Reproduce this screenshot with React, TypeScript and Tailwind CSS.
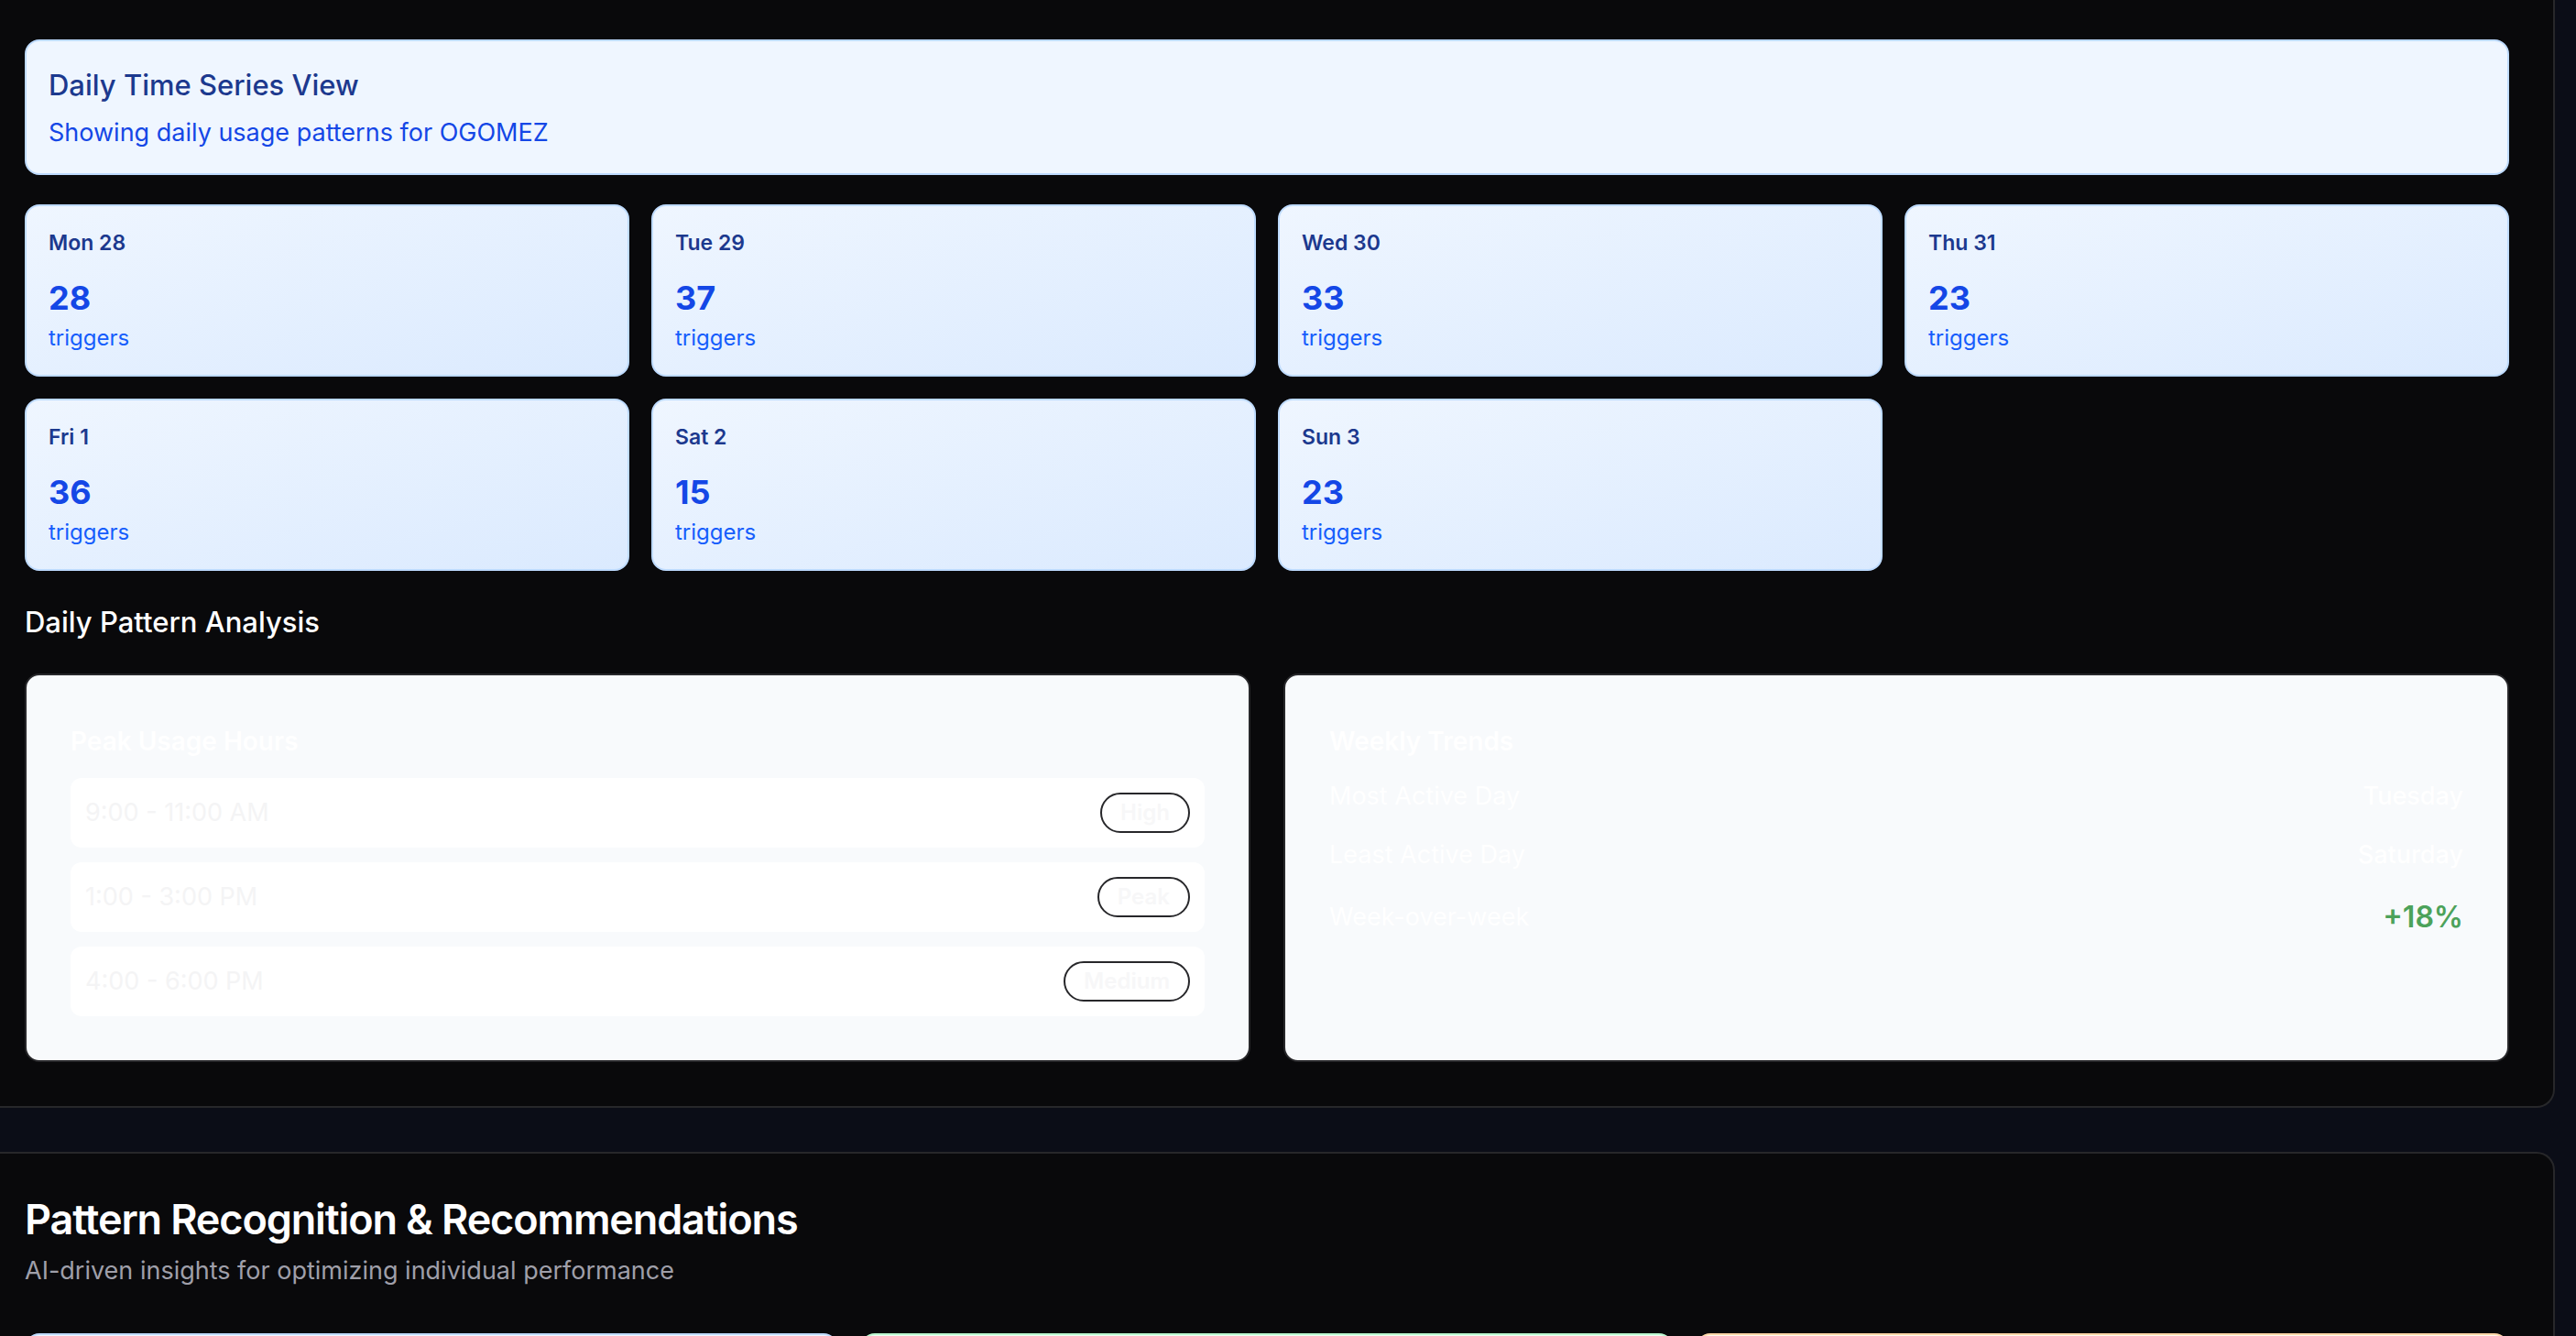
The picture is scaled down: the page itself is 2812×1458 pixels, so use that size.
const days = [
  { label: "Mon 28", count: 28 },
  { label: "Tue 29", count: 37 },
  { label: "Wed 30", count: 33 },
  { label: "Thu 31", count: 23 },
  { label: "Fri 1", count: 36 },
  { label: "Sat 2", count: 15 },
  { label: "Sun 3", count: 23 },
];

const peakHours = [
  { time: "9:00 - 11:00 AM", level: "High" },
  { time: "1:00 - 3:00 PM", level: "Peak" },
  { time: "4:00 - 6:00 PM", level: "Medium" },
];

const DayCard = ({ label, count }: { label: string; count: number }) => {
  return (
    <div className="rounded-[16px] border-2 border-blue-200 bg-gradient-to-br from-blue-50 to-blue-100 p-6">
      <p className="text-[23px] leading-[32px] font-semibold text-blue-900">{label}</p>
      <p className="mt-4 text-[36px] leading-[56px] font-bold text-blue-700">{count}</p>
      <p className="text-[24px] leading-[32px] text-blue-600">triggers</p>
    </div>
  );
};

export default function App() {
  return (
    <div
      className="min-h-screen bg-[#0b0d17] pr-[23px] pb-12 flex flex-col gap-12"
      style={{ fontFamily: "Inter, 'Noto Sans', sans-serif" }}
    >
      {/* section scrolled past its top */}
      <section className="bg-[#09090b] border-r-2 border-b-2 border-[#27272a] rounded-br-[20px] pl-[27px] pr-12 pt-[43px] pb-12 flex flex-col gap-8">
        <div className="rounded-[16px] border-2 border-blue-200 bg-blue-50 p-6">
          <h3 className="text-[31px] leading-[48px] font-medium text-blue-900">Daily Time Series View</h3>
          <p className="mt-2 text-[27px] leading-[40px] text-blue-700">Showing daily usage patterns for OGOMEZ</p>
        </div>

        <div className="grid grid-cols-4 gap-6">
          {days.map((d) => (
            <DayCard key={d.label} label={d.label} count={d.count} />
          ))}
        </div>

        <div className="flex flex-col gap-8">
          <h4 className="text-[31px] leading-[48px] font-medium text-white">Daily Pattern Analysis</h4>
          <div className="grid grid-cols-2 gap-9">
            <div className="rounded-[16px] border-2 border-[#27272a] bg-slate-50 p-12">
              <h5 className="text-[28px] leading-[48px] font-semibold text-white">Peak Usage Hours</h5>
              <div className="mt-4 flex flex-col gap-4">
                {peakHours.map((h) => (
                  <div key={h.time} className="flex items-center justify-between rounded-[12px] bg-white p-4">
                    <span className="text-[27px] leading-[40px] text-[#f4f4f5]">{h.time}</span>
                    <span className="rounded-full border-2 border-[#27272a] px-5 py-1 text-[24px] leading-[32px] font-semibold text-[#f7f7f8]">
                      {h.level}
                    </span>
                  </div>
                ))}
              </div>
            </div>

            <div className="rounded-[16px] border-2 border-[#27272a] bg-slate-50 p-12">
              <h5 className="text-[28px] leading-[48px] font-semibold text-white">Weekly Trends</h5>
              <div className="mt-4 flex flex-col gap-6">
                <div className="flex items-center justify-between">
                  <span className="text-[27px] leading-[40px] text-white">Most Active Day</span>
                  <span className="text-[27px] leading-[40px] font-medium text-white">Tuesday</span>
                </div>
                <div className="flex items-center justify-between">
                  <span className="text-[27px] leading-[40px] text-white">Least Active Day</span>
                  <span className="text-[27px] leading-[40px] font-medium text-white">Saturday</span>
                </div>
                <div className="flex items-center justify-between">
                  <span className="text-[27px] leading-[40px] text-white">Week-over-week</span>
                  <span className="text-[32px] leading-[48px] font-semibold text-[#4ca25a]">+18%</span>
                </div>
              </div>
            </div>
          </div>
        </div>
      </section>

      <section className="bg-[#09090b] border-t-2 border-r-2 border-[#27272a] rounded-tr-[20px] pl-[27px] pr-12 pt-12 pb-12">
        <div className="flex flex-col gap-3">
          <h2 className="text-[45px] leading-[48px] font-semibold tracking-tight text-white">
            Pattern Recognition &amp; Recommendations
          </h2>
          <p className="text-[27px] leading-[40px] text-zinc-400">AI-driven insights for optimizing individual performance</p>
        </div>
        <div className="mt-12 grid grid-cols-3 gap-6">
          <div className="h-[240px] rounded-[16px] border-2 border-blue-200 bg-blue-50" />
          <div className="h-[240px] rounded-[16px] border-2 border-green-200 bg-green-50" />
          <div className="h-[240px] rounded-[16px] border-2 border-orange-200 bg-orange-50" />
        </div>
      </section>
    </div>
  );
}
